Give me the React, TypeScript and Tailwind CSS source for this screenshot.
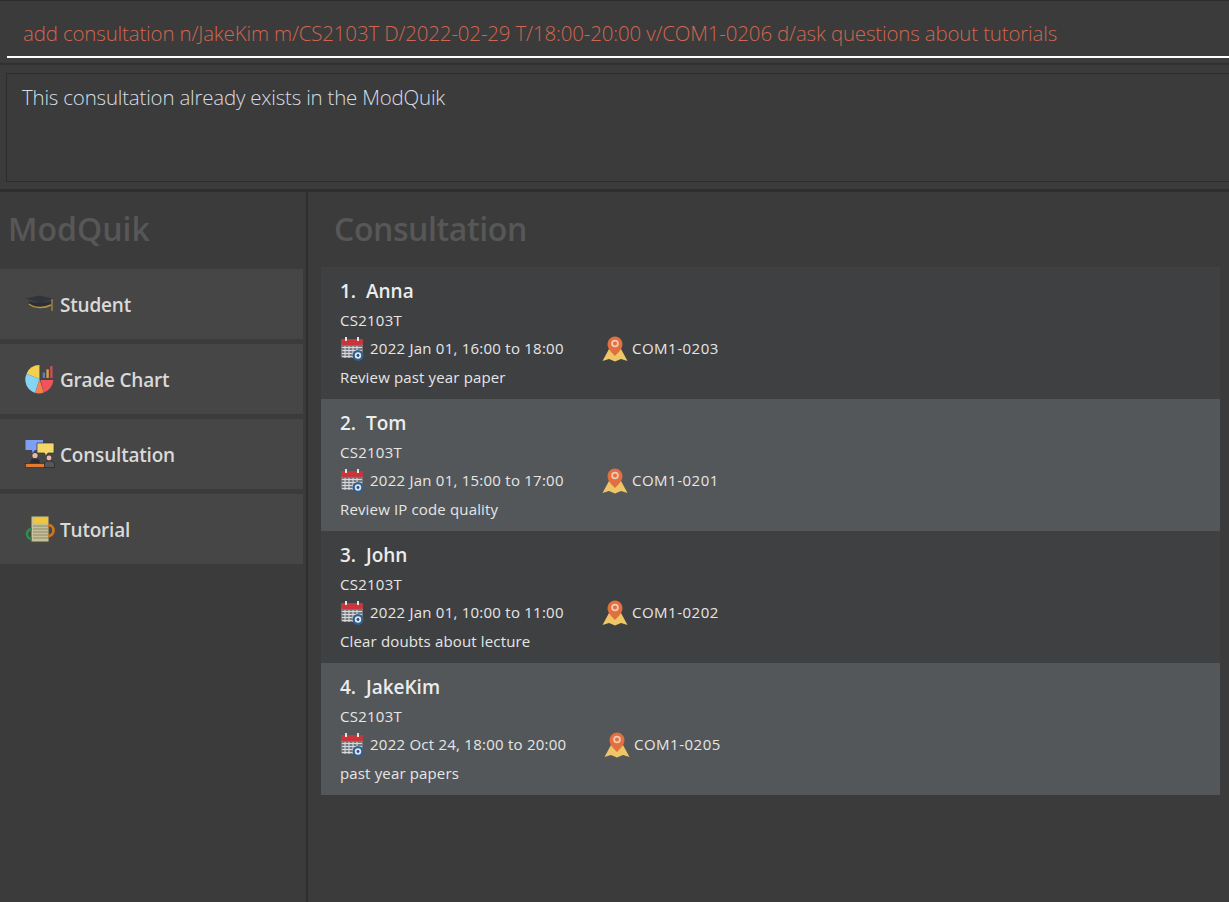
import React from 'react'

const font = { fontFamily: '"Open Sans", "Noto Sans", sans-serif' }

type Consultation = {
  readonly name: string
  readonly when: string
  readonly venue: string
  readonly note: string
  readonly width: string
}

const consultations: ReadonlyArray<Consultation> = [
  { name: 'Anna', when: '2022 Jan 01, 16:00 to 18:00', venue: 'COM1-0203', note: 'Review past year paper', width: 'w-[262px]' },
  { name: 'Tom', when: '2022 Jan 01, 15:00 to 17:00', venue: 'COM1-0201', note: 'Review IP code quality', width: 'w-[262px]' },
  { name: 'John', when: '2022 Jan 01, 10:00 to 11:00', venue: 'COM1-0202', note: 'Clear doubts about lecture', width: 'w-[262px]' },
  { name: 'JakeKim', when: '2022 Oct 24, 18:00 to 20:00', venue: 'COM1-0205', note: 'past year papers', width: 'w-[264px]' },
]

const CalendarIcon = () => (
  <svg viewBox="0 0 24 24" className="mt-[2px] h-6 w-6 shrink-0">
    <rect x="1" y="2" width="22" height="19" rx="2" fill="#75787c" />
    <rect x="1" y="2" width="22" height="6" rx="1.5" fill="#c8363c" />
    <rect x="5" y="0" width="2" height="4" fill="#e4e4e4" />
    <rect x="17" y="0" width="2" height="4" fill="#e4e4e4" />
    <path d="M2 10.5h20M2 13.5h20M2 16.5h20M2 19.5h20M5 9v12M9 9v12M13 9v12M17 9v12" stroke="#d4d7db" strokeWidth="1.1" />
    <circle cx="18" cy="18.5" r="5.5" fill="#2f5f8f" />
    <circle cx="18" cy="18.5" r="3.2" fill="#dfe6ee" />
    <circle cx="18" cy="18.5" r="1.4" fill="#2f4a66" />
  </svg>
)

const PinIcon = () => (
  <svg viewBox="0 0 26 26" className="mt-[2px] h-[26px] w-[26px] shrink-0">
    <path d="M7 13 L0.5 25 L7 23 L13 25.5 L19 23 L25.5 25 L19 13 Z" fill="#eec668" />
    <path d="M13 20 C9 16 5.5 12.5 5.5 8 A7.5 7.5 0 0 1 20.5 8 C20.5 12.5 17 16 13 20 Z" fill="#e2703f" />
    <circle cx="13" cy="7.5" r="3.8" fill="#f3c9b5" />
    <circle cx="13" cy="7.5" r="2" fill="#e2703f" />
  </svg>
)

const CapIcon = () => (
  <svg viewBox="0 0 30 18" className="h-[18px] w-[30px]">
    <path d="M0 3.5 L15 0.5 L29 4 L15 8 Z" fill="#30343c" />
    <path d="M4 6 C8 8 20 8 26 6 L26 10 C20 14 10 14 4 9 Z" fill="#2c2e35" />
    <path d="M4 9 C10 13.5 19 13.5 26 10" stroke="#b8953a" strokeWidth="1.5" fill="none" />
    <path d="M27 4 V16" stroke="#a88a3a" strokeWidth="1.3" />
  </svg>
)

const ChartIcon = () => (
  <svg viewBox="2 1 27 28" className="h-[30px] w-[30px]">
    <path d="M15 15 L15 2 A13 13 0 0 0 3 10 Z" fill="#f5d04f" />
    <path d="M15 15 L3 10 A13 13 0 0 0 11 28 Z" fill="#86d3f5" />
    <path d="M15 15 L11 28 A13 13 0 0 0 19 27.5 Z" fill="#f2824e" />
    <path d="M16 16 L28 16 A13 13 0 0 1 19 27.5 Z" fill="#f0535c" />
    <rect x="18" y="9" width="2.2" height="5" fill="#5b7fc4" />
    <rect x="21.5" y="6" width="2.2" height="8" fill="#e0a23c" />
    <rect x="25" y="3" width="2.2" height="11" fill="#d64a5a" />
  </svg>
)

const PeopleIcon = () => (
  <svg viewBox="0 0 30 30" className="h-[30px] w-[30px]">
    <path d="M0.5 1 H18 V11 H10 L7.5 14 L7 11 H0.5 Z" fill="#7f9ff5" />
    <path d="M12 4 H29 V14 H23 L20.5 17 L19.5 14 H12 Z" fill="#f5d767" stroke="#333" strokeWidth="0.7" />
    <circle cx="10" cy="16.5" r="2.6" fill="#eeb9a8" />
    <path d="M5 24 L6.5 20 H13.5 L15 24 Z" fill="#2d2d2f" />
    <rect x="0.5" y="24.5" width="19" height="4" fill="#e07b34" stroke="#222" strokeWidth="0.6" />
    <circle cx="24" cy="19" r="2.4" fill="#eeb9a8" />
    <path d="M19.5 28.5 V25 C19.5 23 21 22 24 22 C27 22 29.5 23 29.5 25 V28.5 Z" fill="#55565a" stroke="#222" strokeWidth="0.6" />
  </svg>
)

const BooksIcon = () => (
  <svg viewBox="0 0 30 30" className="h-[30px] w-[30px]">
    <rect x="6" y="2" width="18" height="26" fill="#c5bf9a" stroke="#4d4a38" />
    <rect x="8.5" y="4" width="14" height="5" fill="#f0c63c" />
    <path d="M8 12h15M8 15h15M8 18h15M8 21h15M8 24h15" stroke="#8b8768" strokeWidth="1.2" />
    <path d="M7 15 A5 5 0 1 0 7 25" stroke="#2f8a4f" strokeWidth="2.8" fill="none" />
    <path d="M23 11 A5.5 5.5 0 0 1 23 22" stroke="#c9761e" strokeWidth="2.8" fill="none" />
  </svg>
)

const navItems = [
  { label: 'Student', icon: <CapIcon /> },
  { label: 'Grade Chart', icon: <ChartIcon /> },
  { label: 'Consultation', icon: <PeopleIcon /> },
  { label: 'Tutorial', icon: <BooksIcon /> },
]

const ConsultationCard = ({ item, index }: { readonly item: Consultation; readonly index: number }) => (
  <div className={`flex h-[132px] flex-col pl-[19px] text-[15px] tracking-[0.15px] text-[#e6e6e6] ${index % 2 === 0 ? 'bg-[#3f4042]' : 'bg-[#535759]'}`}>
    <div className="mt-[11px] h-[26px] text-[19px] leading-[26px] font-semibold tracking-normal whitespace-pre text-[#ececec]">
      {`${index + 1}.  ${item.name}`}
    </div>
    <div className="mt-[6px] h-5 leading-5 tracking-[0.25px]">CS2103T</div>
    <div className="mt-[4px] flex h-[28px] items-center">
      <span className={`flex shrink-0 items-center gap-[6px] ${item.width}`}>
        <CalendarIcon />
        <span className="tracking-[0.24px] whitespace-nowrap">{item.when}</span>
      </span>
      <span className="flex items-center gap-[4px]">
        <PinIcon />
        <span className="tracking-[0.5px]">{item.venue}</span>
      </span>
    </div>
    <div className="mt-[5px] leading-5">{item.note}</div>
  </div>
)

export default function App() {
  return (
    <div style={font} className="flex h-[902px] w-[1229px] flex-col overflow-hidden bg-[#3b3b3b]">
      <div className="h-[65px] shrink-0 border-t border-b-2 border-t-[#2e2e2e] border-b-[#303030] pt-[7px] pl-[7px]">
        <div className="h-[50px] border-b-2 border-white pl-[16px] text-[20.5px] leading-[50px] font-light tracking-[-0.17px] whitespace-nowrap text-[#d0664f]">
          add consultation n/JakeKim m/CS2103T D/2022-02-29 T/18:00-20:00 v/COM1-0206 d/ask questions about tutorials
        </div>
      </div>
      <div className="h-[127px] shrink-0 border-b-[3px] border-[#2e2e2e] pt-[8px] pb-[7px] pl-[6px]">
        <div className="h-full border border-r-0 border-[#2c2c2c] pt-[7px] pl-[15px] text-[20.5px] leading-[32px] font-light tracking-[-0.21px] text-[#d6dde4]">
          This consultation already exists in the ModQuik
        </div>
      </div>
      <div className="flex min-h-0 flex-1">
        <aside className="w-[308px] shrink-0 border-r-2 border-[#2e2e2e]">
          <h1 className="h-[77px] pt-[18px] pl-[8px] text-[32px] leading-[38px] font-semibold text-[#575757]">ModQuik</h1>
          <nav className="mr-[3px] flex flex-col gap-[5px]">
            {navItems.map(n => (
              <div key={n.label} className="flex h-[70px] items-center bg-[#464646] pl-[25px] text-[19px] font-semibold tracking-[-0.2px] text-[#d9d9d9]">
                <span className="flex w-[35px] items-center">{n.icon}</span>
                <span className="pt-[2px]">{n.label}</span>
              </div>
            ))}
          </nav>
        </aside>
        <main className="min-w-0 flex-1 pr-[9px] pl-[13px]">
          <h2 className="h-[75px] pt-[18px] pl-[13px] text-[32px] leading-[38px] font-semibold tracking-[-0.4px] text-[#575757]">Consultation</h2>
          {consultations.map((c, i) => (
            <ConsultationCard key={c.name} item={c} index={i} />
          ))}
        </main>
      </div>
    </div>
  )
}
